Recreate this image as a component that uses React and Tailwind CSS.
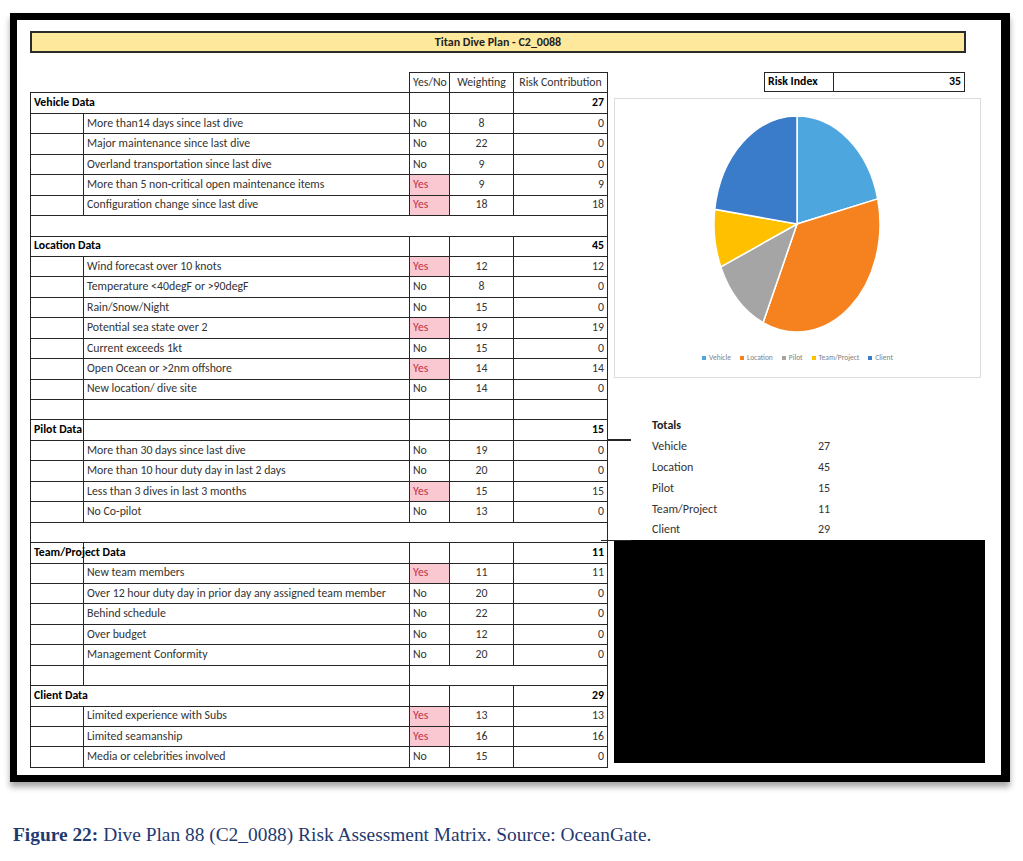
const sections = [
  {
    title: 'Vehicle Data',
    total: 27,
    split: false,
    blank: 'full',
    items: [
      ['More than14 days since last dive', 'No', 8, 0],
      ['Major maintenance since last dive', 'No', 22, 0],
      ['Overland transportation since last dive', 'No', 9, 0],
      ['More than 5 non-critical open maintenance items', 'Yes', 9, 9],
      ['Configuration change since last dive', 'Yes', 18, 18],
    ],
  },
  {
    title: 'Location Data',
    total: 45,
    split: false,
    blank: 'cols',
    items: [
      ['Wind forecast over 10 knots', 'Yes', 12, 12],
      ['Temperature <40degF or >90degF', 'No', 8, 0],
      ['Rain/Snow/Night', 'No', 15, 0],
      ['Potential sea state over 2', 'Yes', 19, 19],
      ['Current exceeds 1kt', 'No', 15, 0],
      ['Open Ocean or >2nm offshore', 'Yes', 14, 14],
      ['New location/ dive site', 'No', 14, 0],
    ],
  },
  {
    title: 'Pilot Data',
    total: 15,
    split: true,
    stray: true,
    blank: 'full',
    items: [
      ['More than 30 days since last dive', 'No', 19, 0],
      ['More than 10 hour duty day in last 2 days', 'No', 20, 0],
      ['Less than 3 dives in last 3 months', 'Yes', 15, 15],
      ['No Co-pilot', 'No', 13, 0],
    ],
  },
  {
    title: 'Team/Project Data',
    total: 11,
    split: true,
    blank: 'merged',
    items: [
      ['New team members', 'Yes', 11, 11],
      ['Over 12 hour duty day in prior day any assigned team member', 'No', 20, 0],
      ['Behind schedule', 'No', 22, 0],
      ['Over budget', 'No', 12, 0],
      ['Management Conformity', 'No', 20, 0],
    ],
  },
  {
    title: 'Client Data',
    total: 29,
    split: false,
    items: [
      ['Limited experience with Subs', 'Yes', 13, 13],
      ['Limited seamanship', 'Yes', 16, 16],
      ['Media or celebrities involved', 'No', 15, 0],
    ],
  },
]

const totals = [
  ['Vehicle', 27, '#4ea6de'],
  ['Location', 45, '#f5821f'],
  ['Pilot', 15, '#a5a5a5'],
  ['Team/Project', 11, '#ffc000'],
  ['Client', 29, '#3a7cc9'],
]

const cell = 'border-[1.5px] border-[#262626] h-[20.45px] px-[3px] p-0 leading-none'

function SectionRows({ s }) {
  const rows = []
  rows.push(
    <tr key="head">
      {s.split ? (
        <>
          <td className={`${cell} font-bold text-black whitespace-nowrap overflow-visible`}>{s.title}</td>
          <td className={cell}></td>
        </>
      ) : (
        <td colSpan={2} className={`${cell} font-bold text-black`}>{s.title}</td>
      )}
      <td className={cell}></td>
      <td className={cell}></td>
      <td className={`${cell} text-right font-bold text-black relative`}>
        {s.total}
        {s.stray && <span className="absolute right-[-24px] bottom-[-1px] w-[24px] h-[1.5px] bg-[#262626]" />}
      </td>
    </tr>
  )
  s.items.forEach(([label, yn, w, r], i) => {
    const yes = yn === 'Yes'
    rows.push(
      <tr key={i}>
        <td className={cell}></td>
        <td className={`${cell} whitespace-nowrap`}>{label}</td>
        <td className={`${cell} ${yes ? 'bg-[#f9c8d1] text-[#c2304a]' : ''}`}>{yn}</td>
        <td className={`${cell} text-center`}>{w}</td>
        <td className={`${cell} text-right`}>{r}</td>
      </tr>
    )
  })
  if (s.blank === 'full') {
    rows.push(
      <tr key="blank">
        <td colSpan={5} className={cell}></td>
      </tr>
    )
  } else if (s.blank === 'cols') {
    rows.push(
      <tr key="blank">
        <td className={cell}></td>
        <td className={cell}></td>
        <td className={cell}></td>
        <td className={cell}></td>
        <td className={cell}></td>
      </tr>
    )
  } else if (s.blank === 'merged') {
    rows.push(
      <tr key="blank">
        <td className={cell}></td>
        <td className={cell}></td>
        <td colSpan={3} className={cell}></td>
      </tr>
    )
  }
  return rows
}

function Pie() {
  const cx = 182
  const cy = 125
  const rx = 83
  const ry = 108
  const sum = totals.reduce((a, t) => a + t[1], 0)
  let acc = 0
  const pt = (f) => {
    const a = f * Math.PI * 2
    return [cx + rx * Math.sin(a), cy - ry * Math.cos(a)]
  }
  return (
    <svg width="365" height="250" className="block">
      {totals.map(([name, v, color]) => {
        const f0 = acc / sum
        acc += v
        const f1 = acc / sum
        const [x0, y0] = pt(f0)
        const [x1, y1] = pt(f1)
        const large = f1 - f0 > 0.5 ? 1 : 0
        return (
          <path
            key={name}
            d={`M${cx} ${cy} L${x0} ${y0} A${rx} ${ry} 0 ${large} 1 ${x1} ${y1} Z`}
            fill={color}
            stroke="#fff"
            strokeWidth="1.5"
          />
        )
      })}
    </svg>
  )
}

export default function App() {
  return (
    <div className="bg-white w-[1023px] h-[861px] pt-[13px] pl-[10px]" style={{ fontFamily: 'Carlito, Lato, "Liberation Sans", sans-serif' }}>
      <div className="w-[1000px] h-[769px] border-[7px] border-r-[9px] border-black bg-white shadow-[0_5px_6px_rgba(0,0,0,0.35)] pt-[11px] pl-[13px]">
        {/* title bar */}
        <div className="w-[936px] h-[22px] border-2 border-[#2a2a2a] bg-[#fde89c] flex items-center justify-center text-[12px] font-bold text-[#222]">
          Titan Dive Plan - C2_0088
        </div>

        <div className="flex items-start mt-[19px] gap-[6px]">
          {/* risk matrix */}
          <table className="table-fixed border-collapse w-[577px] text-[11.8px] text-[#333]">
            <colgroup>
              <col className="w-[53px]" />
              <col className="w-[326px]" />
              <col className="w-[40px]" />
              <col className="w-[64px]" />
              <col className="w-[94px]" />
            </colgroup>
            <tbody>
              <tr>
                <td colSpan={2} className="border-0 h-[20.45px] p-0"></td>
                <td className={`${cell} whitespace-nowrap`}>Yes/No</td>
                <td className={`${cell} text-center`}>Weighting</td>
                <td className={`${cell} text-center whitespace-nowrap`}>Risk Contribution</td>
              </tr>
              {sections.map((s) => (
                <SectionRows key={s.title} s={s} />
              ))}
            </tbody>
          </table>

          {/* right side */}
          <div className="w-[371px] flex flex-col">
            <div className="ml-[150px] w-[201px] h-[20px] flex border-[1.5px] border-[#262626] text-[11.8px]">
              <div className="w-[69px] border-r-[1.5px] border-[#262626] px-[3px] flex items-center font-bold text-black">Risk Index</div>
              <div className="flex-1 px-[3px] flex items-center justify-end font-bold text-black">35</div>
            </div>

            <div className="mt-[6px] w-[367px] h-[280px] border border-[#dcdcdc] flex flex-col items-center">
              <Pie />
              <div className="mt-[4px] flex items-center gap-[9px] text-[7.5px] leading-[9px] text-[#7f7f7f]">
                {totals.map(([name, , color]) => (
                  <div key={name} className="flex items-center gap-[3px]">
                    <span className="w-[4px] h-[4px]" style={{ backgroundColor: color }} />
                    <span>{name}</span>
                  </div>
                ))}
              </div>
            </div>

            <div className="mt-[37px] pl-[38px] text-[12px] text-[#333]">
              <div className="h-[20.8px] flex items-center font-bold text-[#222]">Totals</div>
              {totals.map(([name, v]) => (
                <div key={name} className="h-[20.8px] flex items-center">
                  <span className="w-[166px]">{name}</span>
                  <span>{v}</span>
                </div>
              ))}
            </div>

            <div className="relative w-[371px] h-[223px] bg-black">
              <span className="absolute left-[-13px] top-0 w-[30px] h-[1.5px] bg-[#262626]" />
            </div>
          </div>
        </div>
      </div>

      <p className="mt-[38px] ml-[3px] text-[19.4px] text-[#1f3a70]" style={{ fontFamily: '"Liberation Serif", "Times New Roman", serif' }}>
        <span className="font-bold">Figure 22:</span> Dive Plan 88 (C2_0088) Risk Assessment Matrix. Source: OceanGate.
      </p>
    </div>
  )
}
